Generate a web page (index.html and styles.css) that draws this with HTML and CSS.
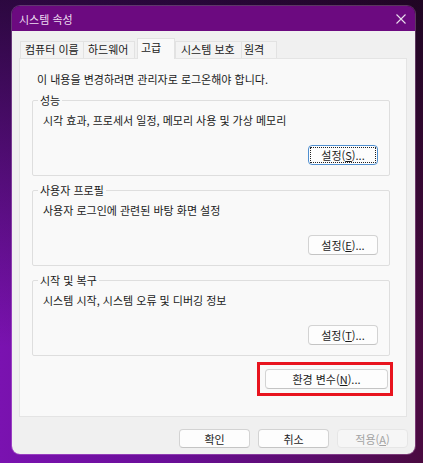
FILE: index.html
```html
<!DOCTYPE html>
<html lang="ko">
<head>
<meta charset="utf-8">
<title>시스템 속성</title>
<link rel="stylesheet" href="styles.css">
</head>
<body>
<div class="window">
  <div class="titlebar">
    <span class="title">시스템 속성</span>
    <svg class="close" width="10" height="10" viewBox="0 0 10 10"><path d="M0.5 0.5 L9.5 9.5 M9.5 0.5 L0.5 9.5" stroke="#e8dcec" stroke-width="1.1" fill="none"/></svg>
  </div>
  <div class="client">
    <div class="tabs">
      <div class="tab t1">컴퓨터 이름</div>
      <div class="tab t2">하드웨어</div>
      <div class="tab t3 active">고급</div>
      <div class="tab t4">시스템 보호</div>
      <div class="tab t5">원격</div>
    </div>
    <div class="panel">
      <p class="notice">이 내용을 변경하려면 관리자로 로그온해야 합니다.</p>
      <div class="group">
        <div class="group-title">성능</div>
        <p class="desc">시각 효과, 프로세서 일정, 메모리 사용 및 가상 메모리</p>
        <div class="row"><button class="btn small focused"><span class="focus-ring">설정(<u>S</u>)...</span></button></div>
      </div>
      <div class="group">
        <div class="group-title">사용자 프로필</div>
        <p class="desc">사용자 로그인에 관련된 바탕 화면 설정</p>
        <div class="row"><button class="btn small">설정(<u>E</u>)...</button></div>
      </div>
      <div class="group">
        <div class="group-title">시작 및 복구</div>
        <p class="desc">시스템 시작, 시스템 오류 및 디버깅 정보</p>
        <div class="row"><button class="btn small">설정(<u>T</u>)...</button></div>
      </div>
      <div class="env-row">
        <div class="highlight"><button class="btn env">환경 변수(<u>N</u>)...</button></div>
      </div>
    </div>
    <div class="footer">
      <button class="btn foot">확인</button>
      <button class="btn foot">취소</button>
      <button class="btn foot disabled">적용(<u>A</u>)</button>
    </div>
  </div>
</div>
</body>
</html>
```
FILE: styles.css
```css
html, body {
  margin: 0;
  padding: 0;
}
body {
  width: 423px;
  height: 463px;
  overflow: hidden;
  font-family: "Noto Sans CJK KR", "Noto Sans", sans-serif;
  font-size: 11px;
  color: #1b1b1b;
  background:
    linear-gradient(to bottom, rgba(18, 4, 26, 0.75) 0%, rgba(18, 4, 26, 0.35) 40%, rgba(18, 4, 26, 0) 75%),
    linear-gradient(to right, #7a12b0 0%, #6a0e98 40%, #5a0c6a 75%, #4a0a40 100%);
}
.window {
  margin: 6px 0 0 12px;
  width: 403px;
  height: 448px;
  border-radius: 8px;
  overflow: hidden;
  display: flex;
  flex-direction: column;
  box-shadow: 0 0 0 1px rgba(255, 200, 255, 0.25);
}
.titlebar {
  height: 25px;
  flex: none;
  background: #6c0a80;
  display: flex;
  align-items: center;
  justify-content: space-between;
  padding: 0 9px 0 7px;
}
.title {
  color: #ecdcf0;
  font-size: 11px;
  line-height: 14px;
}
.close {
  display: block;
  margin-top: 0;
}
.client {
  flex: 1;
  background: #f0f0f0;
  display: flex;
  flex-direction: column;
}
.tabs {
  height: 27px;
  flex: none;
  display: flex;
  align-items: flex-end;
  padding-left: 8px;
}
.tab {
  height: 17px;
  box-sizing: border-box;
  border: 1px solid #e2e2e2;
  border-bottom: none;
  background: #f3f3f3;
  line-height: 14px;
  padding-left: 4px;
  white-space: nowrap;
  color: #1b1b1b;
}
.t1 { width: 64px; }
.t2 { width: 52px; margin-left: -1px; }
.t3 { width: 38px; margin-left: 2px; }
.t4 { width: 67px; padding-left: 5px; }
.t5 { width: 36px; margin-left: -1px; padding-left: 2px; }
.tab.active {
  height: 21px;
  background: #f9f9f9;
  margin-bottom: -1px;
  position: relative;
  z-index: 1;
  padding-top: 1px;
  padding-left: 3px;
}
.panel {
  margin: 0 8px 0 7px;
  height: 359px;
  flex: none;
  box-sizing: border-box;
  background: #f9f9f9;
  border: 1px solid #e4e4e4;
  padding: 12px 16px 0 12px;
}
.notice {
  margin: 0 0 0 5px;
  line-height: 16px;
}
.group {
  margin-top: 13px;
  border: 1px solid #dedede;
  border-radius: 2px;
  padding: 0 11px 10px 10px;
}
.group + .group {
  margin-top: 14px;
}
.group-title {
  width: fit-content;
  margin: -9px 0 0 -5px;
  padding: 0 2px;
  line-height: 16px;
  background: #f9f9f9;
}
.desc {
  margin: 4px 0 0 0;
  line-height: 16px;
}
.row {
  margin-top: 17px;
  display: flex;
  justify-content: flex-end;
}
.btn {
  font-family: inherit;
  font-size: 11px;
  color: #1b1b1b;
  background: #fdfdfd;
  border: 1px solid #d3d3d3;
  border-bottom-color: #c4c4c4;
  border-radius: 4px;
  height: 20px;
  box-sizing: border-box;
  padding: 0;
  line-height: 16px;
  display: flex;
  align-items: center;
  justify-content: center;
}
.btn u {
  text-decoration: underline;
  text-underline-offset: 1px;
}
.small {
  width: 70px;
}
.focused {
  border: 1px solid #4f8fd0;
  padding: 1px;
}
.focus-ring {
  flex: 1;
  align-self: stretch;
  border: 1px dotted #222;
  border-radius: 1px;
  display: flex;
  align-items: center;
  justify-content: center;
}
.env-row {
  margin-top: 6px;
  display: flex;
  justify-content: flex-end;
  margin-right: -3px;
}
.highlight {
  border: 3px solid #e8141e;
  padding: 4px 2px 4px 5px;
}
.env {
  width: 123px;
}
.footer {
  flex: 1;
  display: flex;
  justify-content: flex-end;
  align-items: flex-start;
  gap: 8px;
  padding: 12px 7px 0 0;
}
.foot {
  width: 71px;
  height: 19px;
}
.disabled {
  color: #a3a3a3;
  background: #f6f6f6;
  border-color: #e6e6e6;
}
```
